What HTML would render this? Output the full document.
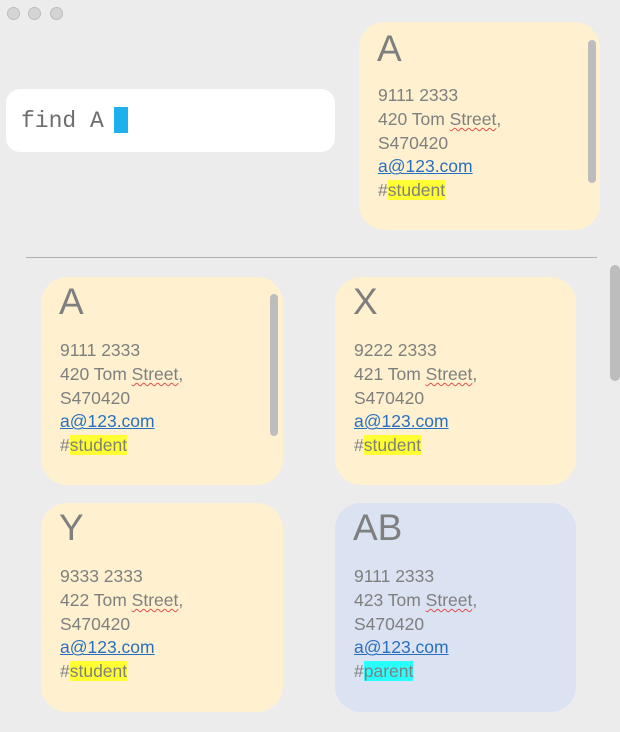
<!DOCTYPE html>
<html><head><meta charset="utf-8"><style>
*{margin:0;padding:0;box-sizing:border-box}
body{width:620px;height:732px;background:#ececec;position:relative;overflow:hidden;font-family:"Liberation Sans",sans-serif}
.dot{position:absolute;top:7px;width:13px;height:13px;border-radius:50%;background:#d4d4d4;border:1px solid #bdbdbd}
.search{position:absolute;left:6px;top:89px;width:329px;height:63px;background:#fff;border-radius:14px}
.search span{position:absolute;left:15px;top:19px;font-family:"Liberation Mono",monospace;font-size:23px;color:#6e6e6e}
.cur{position:absolute;left:108px;top:18px;width:14px;height:26px;background:#1eb0ed}
.card{position:absolute;width:242px;height:208px;background:#fff1cf;border-radius:26px;color:#7f7f7f}
.card .n{position:absolute;left:18px;top:4px;font-size:37px;line-height:42px}
.card .l{position:absolute;left:19px;top:62px;font-size:17.5px;line-height:23.8px}
.u{text-decoration:underline wavy #e05050;text-decoration-thickness:1px;text-underline-offset:2px}
.m{color:#2a6fbf;text-decoration:underline}
.hy{background:#ffff33}.hc{background:#2affff}
.sb{position:absolute;width:8px;background:#bdbdbd;border-radius:4px}
</style></head><body>
<div class="dot" style="left:7px"></div><div class="dot" style="left:28px"></div><div class="dot" style="left:50px"></div>
<div class="search"><span>find A</span><div class="cur"></div></div>
<div class="card" style="left:359px;top:22px;width:241px"><div class="n" style="top:6px">A</div><div class="l">9111 2333<br>420 Tom <span class="u">Street</span>,<br>S470420<br><span class="m">a@123.com</span><br>#<span class="hy">student</span></div><div class="sb" style="left:229px;top:18px;height:143px"></div></div>
<div style="position:absolute;left:26px;top:257px;width:571px;height:1px;background:#b0b0b0"></div>
<div class="card" style="left:41px;top:277px"><div class="n">A</div><div class="l">9111 2333<br>420 Tom <span class="u">Street</span>,<br>S470420<br><span class="m">a@123.com</span><br>#<span class="hy">student</span></div><div class="sb" style="left:229px;top:17px;height:142px"></div></div>
<div class="card" style="left:335px;top:277px;width:241px"><div class="n">X</div><div class="l">9222 2333<br>421 Tom <span class="u">Street</span>,<br>S470420<br><span class="m">a@123.com</span><br>#<span class="hy">student</span></div></div>
<div class="card" style="left:41px;top:503px;height:209px"><div class="n">Y</div><div class="l">9333 2333<br>422 Tom <span class="u">Street</span>,<br>S470420<br><span class="m">a@123.com</span><br>#<span class="hy">student</span></div></div>
<div class="card" style="left:335px;top:503px;width:241px;height:209px;background:#dbe2f1"><div class="n">AB</div><div class="l">9111 2333<br>423 Tom <span class="u">Street</span>,<br>S470420<br><span class="m">a@123.com</span><br>#<span class="hc">parent</span></div></div>
<div class="sb" style="left:610px;top:265px;width:10px;height:116px;border-radius:5px"></div>
</body></html>
